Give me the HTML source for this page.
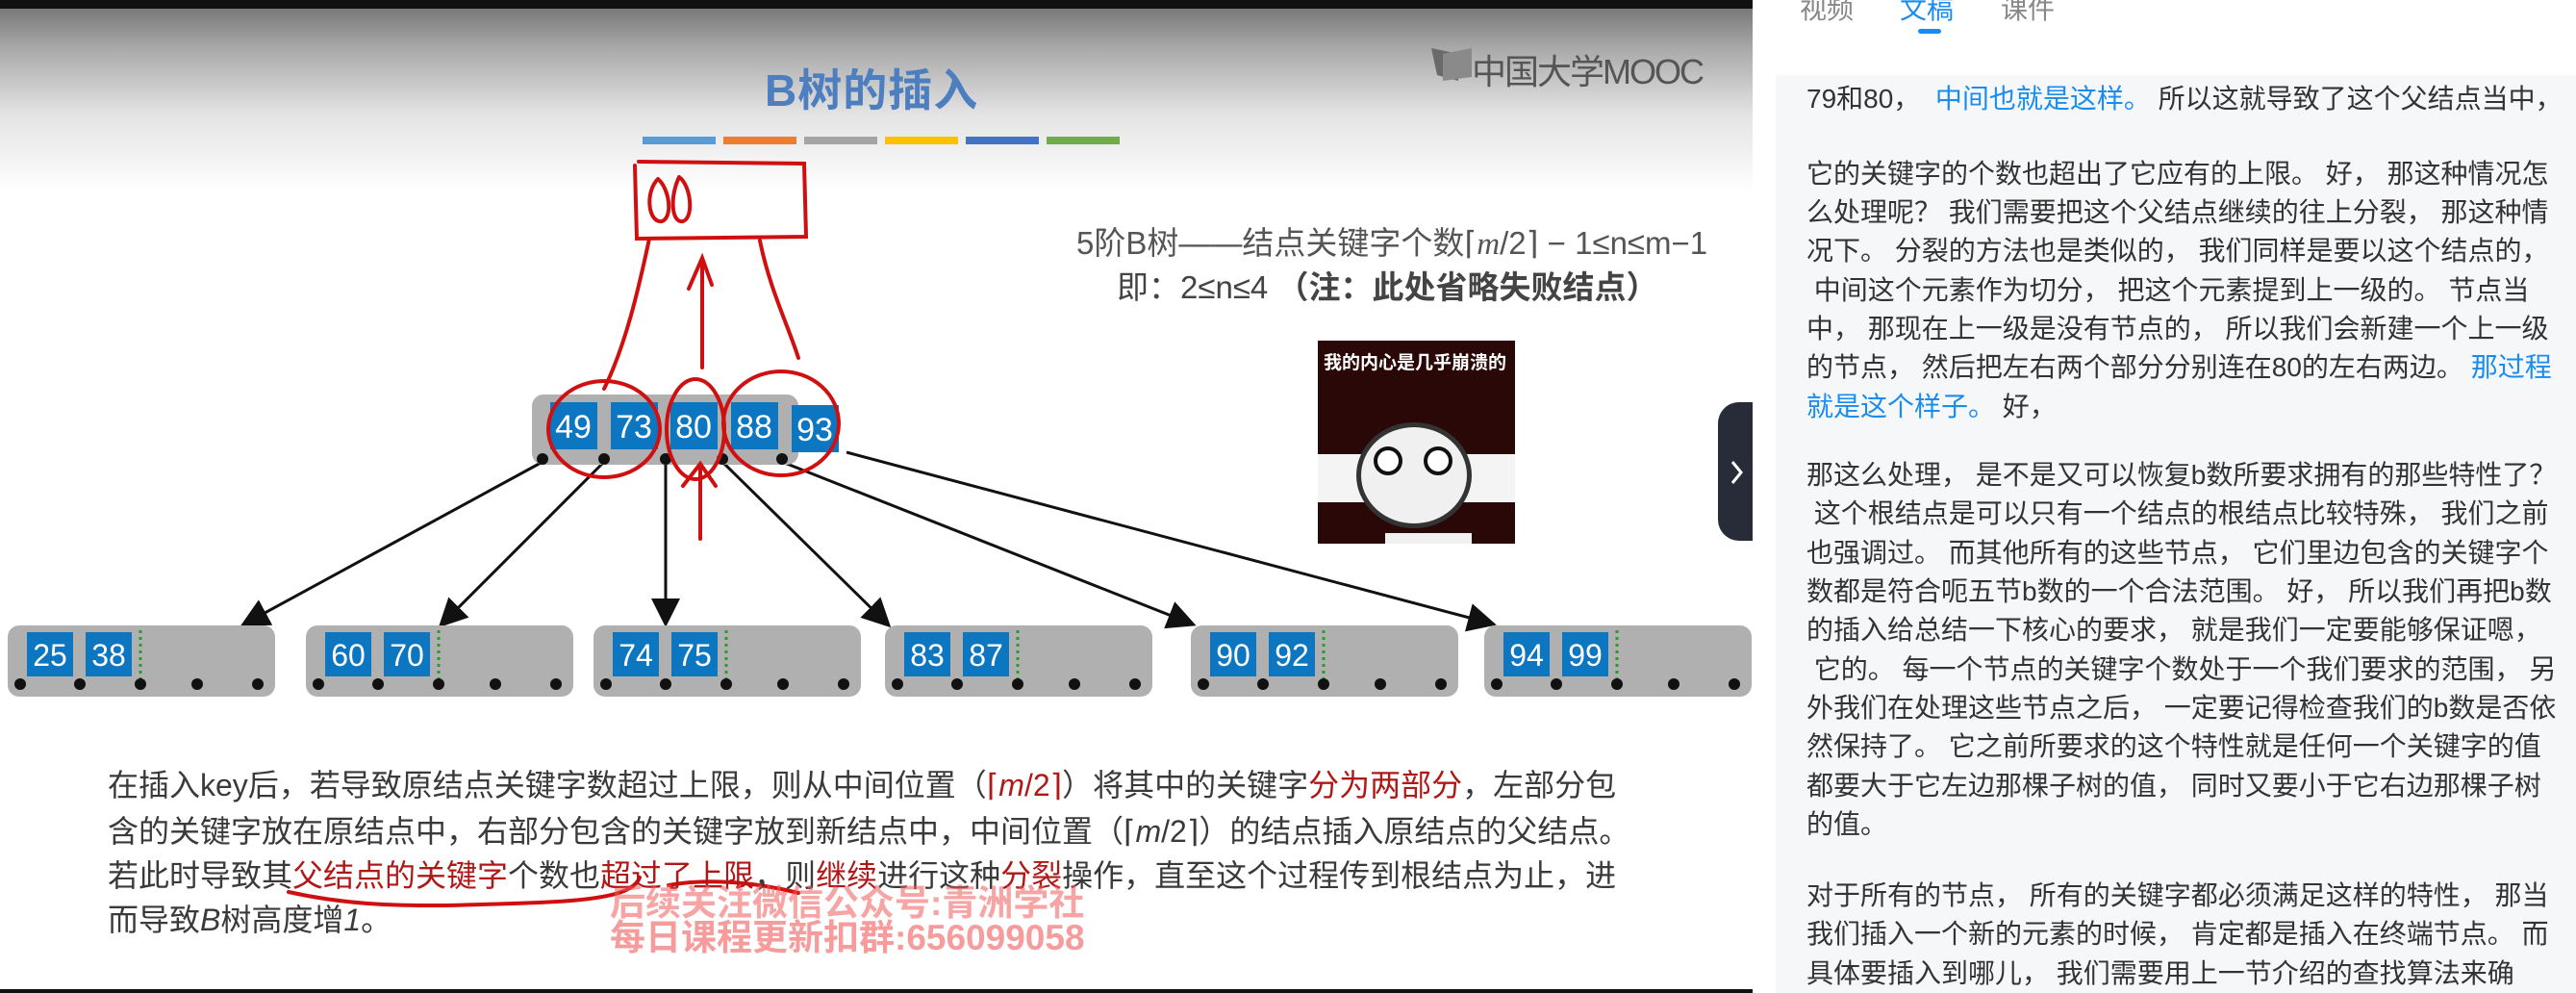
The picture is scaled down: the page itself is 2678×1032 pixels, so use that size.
<!DOCTYPE html>
<html><head><meta charset="utf-8"><style>
*{margin:0;padding:0;box-sizing:border-box}
body{width:2678px;height:1032px;overflow:hidden;background:#fff;position:relative;font-family:"Liberation Sans","Noto Sans CJK SC",sans-serif}
.abs{position:absolute;white-space:nowrap}
.panel{position:absolute;left:1846px;top:78px;width:832px;height:954px;background:#f6f7f9}
.pl{position:absolute;left:1878px;font-size:28px;color:#333;white-space:nowrap;line-height:40px}
.b{color:#1a8cf0}
.bt{position:absolute;left:112px;font-size:32px;color:#3a3a3a;white-space:nowrap;line-height:40px}
.r{color:#b01818}
</style></head><body>
<div class="abs" style="left:0;top:0;width:1822px;height:1032px;background:#fff"></div>
<div class="abs" style="left:0;top:0;width:1822px;height:210px;background:linear-gradient(#6e6e6e 0px,#a9a9a9 50px,#e4e4e4 120px,#fff 200px)"></div>
<div class="abs" style="left:0;top:0;width:1822px;height:9px;background:#111"></div>
<div class="abs" style="left:0;top:1028px;width:1822px;height:4px;background:#111"></div>
<div class="abs" style="left:795px;top:58px;font-size:46px;font-weight:bold;color:#4d7fc0;letter-spacing:1px">B树的插入</div>
<svg class="abs" style="left:1480px;top:44px" width="60" height="50"><path d="M8 6 L36 12 L36 40 L14 34 Z" fill="#6a6a6a"/><path d="M20 12 L50 6 L50 36 L20 40Z" fill="#8a8a8a"/></svg>
<div class="abs" style="left:1530px;top:46px;font-size:36px;color:#555;letter-spacing:-2px">中国大学MOOC</div>
<div class="abs" style="left:668px;top:142px;width:76px;height:8px;background:#5b9bd5"></div>
<div class="abs" style="left:752px;top:142px;width:76px;height:8px;background:#ed7d31"></div>
<div class="abs" style="left:836px;top:142px;width:76px;height:8px;background:#a5a5a5"></div>
<div class="abs" style="left:920px;top:142px;width:76px;height:8px;background:#ffc000"></div>
<div class="abs" style="left:1004px;top:142px;width:76px;height:8px;background:#4472c4"></div>
<div class="abs" style="left:1088px;top:142px;width:76px;height:8px;background:#70ad47"></div>
<div class="abs" style="left:1119px;top:226px;font-size:33px;color:#555">5阶B树——结点关键字个数⌈<i style="font-family:'Liberation Serif'">m</i>/2⌉ − 1≤n≤m−1</div>
<div class="abs" style="left:1161px;top:272px;font-size:33px;color:#444">即：2≤n≤4 <b>（注：此处省略失败结点）</b></div>
<div class="abs" style="left:1370px;top:354px;width:205px;height:211px;background:#2a0808;overflow:hidden">
<div style="position:absolute;left:0;top:118px;width:205px;height:50px;background:#f4f4f4"></div>
<div style="position:absolute;left:40px;top:85px;width:120px;height:110px;border-radius:50%;background:#f0f0f0;border:5px solid #333"></div>
<div style="position:absolute;left:70px;top:200px;width:90px;height:20px;background:#f0f0f0"></div>
<div style="position:absolute;left:58px;top:110px;width:30px;height:30px;border-radius:50%;background:#fff;border:4px solid #111"></div>
<div style="position:absolute;left:110px;top:110px;width:30px;height:30px;border-radius:50%;background:#fff;border:4px solid #111"></div>
<div style="position:absolute;left:6px;top:8px;font-size:19px;color:#fff;font-weight:bold">我的内心是几乎崩溃的</div>
</div>
<div class="abs" style="left:1786px;top:418px;width:36px;height:144px;background:#272c38;border-radius:22px 0 0 22px"></div>
<svg class="abs" style="left:1796px;top:476px" width="20" height="30"><path d="M5 4 L14 15 L5 26" stroke="#fff" stroke-width="3" fill="none"/></svg>
<svg class="abs" style="left:0;top:0" width="1822" height="1032">
<defs><marker id="ah" markerWidth="10" markerHeight="10" refX="8" refY="5" orient="auto"><path d="M0 0 L10 5 L0 10Z" fill="#111"/></marker></defs>
<g stroke="#111" stroke-width="3" marker-end="url(#ah)">
<line x1="564" y1="480" x2="255" y2="648"/>
<line x1="628" y1="480" x2="460" y2="648"/>
<line x1="692" y1="480" x2="692" y2="646"/>
<line x1="751" y1="480" x2="922" y2="648"/>
<line x1="813" y1="480" x2="1238" y2="648"/>
<line x1="880" y1="470" x2="1550" y2="648"/>
</g>
<rect x="553" y="410" width="277" height="73" rx="12" fill="#b0b0b0"/>
<g fill="#0d76c1"><rect x="572" y="418" width="49" height="49"/><rect x="635" y="418" width="49" height="49"/><rect x="697" y="418" width="49" height="49"/><rect x="760" y="418" width="49" height="49"/><rect x="823" y="421" width="49" height="49"/></g>
<g fill="#fff" font-size="34" font-family="Liberation Sans" text-anchor="middle"><text x="596" y="455">49</text><text x="659" y="455">73</text><text x="721" y="455">80</text><text x="784" y="455">88</text><text x="847" y="458">93</text></g>
<g fill="#111"><circle cx="564" cy="477" r="6"/><circle cx="628" cy="477" r="6"/><circle cx="692" cy="477" r="6"/><circle cx="751" cy="477" r="6"/><circle cx="813" cy="477" r="6"/></g>
<g id="leaves"></g>
<g fill="none" stroke="#d01010" stroke-width="4" stroke-linecap="round">
<path d="M660 172 L662 248 L838 246 L836 170 L664 168"/>
<path d="M684 186 C670 200 674 232 688 230 C700 226 696 196 684 186 M706 184 C696 205 698 232 710 230 C722 226 718 192 706 184"/>
<path d="M675 248 C664 300 650 360 628 404"/>
<path d="M730 382 L730 275 M716 300 L730 268 L740 296"/>
<path d="M790 250 C800 300 820 340 830 372"/>
<ellipse cx="628" cy="446" rx="58" ry="50"/>
<ellipse cx="723" cy="446" rx="30" ry="52"/>
<ellipse cx="812" cy="440" rx="60" ry="54"/>
<path d="M728 560 L728 484 M710 505 L728 482 L744 505"/>
<path d="M300 927 C380 945 450 942 560 938 C640 935 660 925 665 912 M695 920 C740 912 790 918 830 928"/>
</g>
</svg>
<div class="bt" style="top:796px">在插入key后，若导致原结点关键字数超过上限，则从中间位置（<span class="r">⌈<i>m</i>/2⌉</span>）将其中的关键字<span class="r">分为两部分</span>，左部分包</div>
<div class="bt" style="top:844px">含的关键字放在原结点中，右部分包含的关键字放到新结点中，中间位置（⌈<i>m</i>/2⌉）的结点插入原结点的父结点。</div>
<div class="bt" style="top:890px">若此时导致其<span class="r">父结点的关键字</span>个数也<span class="r">超过了上限</span>，则<span class="r">继续</span>进行这种<span class="r">分裂</span>操作，直至这个过程传到根结点为止，进</div>
<div class="bt" style="top:936px">而导致<i>B</i>树高度增<i>1</i>。</div>
<div class="abs" style="left:634px;top:908px;font-size:37px;font-weight:bold;color:rgba(240,90,90,0.55)">后续关注微信公众号:青洲学社</div>
<div class="abs" style="left:634px;top:944px;font-size:37px;font-weight:bold;color:rgba(240,90,90,0.6)">每日课程更新扣群:656099058</div>
<div class="abs" style="left:1871px;top:-12px;font-size:28px;color:#888">视频</div>
<div class="abs" style="left:1975px;top:-12px;font-size:28px;color:#1a8cf0">文稿</div>
<div class="abs" style="left:2080px;top:-12px;font-size:28px;color:#888">课件</div>
<div class="abs" style="left:1994px;top:30px;width:24px;height:5px;border-radius:3px;background:#1a8cf0"></div>
<div class="panel"></div>
<div class="pl" style="top:83px">79和80，&nbsp; <span class="b">中间也就是这样。</span> 所以这就导致了这个父结点当中，</div>
<div class="pl" style="top:161px">它的关键字的个数也超出了它应有的上限。 好，&nbsp;那这种情况怎</div>
<div class="pl" style="top:201px">么处理呢？ 我们需要把这个父结点继续的往上分裂，&nbsp;那这种情</div>
<div class="pl" style="top:241px">况下。 分裂的方法也是类似的，&nbsp;我们同样是要以这个结点的，</div>
<div class="pl" style="top:282px">&nbsp;中间这个元素作为切分，&nbsp;把这个元素提到上一级的。 节点当</div>
<div class="pl" style="top:322px">中，&nbsp;那现在上一级是没有节点的，&nbsp;所以我们会新建一个上一级</div>
<div class="pl" style="top:362px">的节点，&nbsp;然后把左右两个部分分别连在80的左右两边。 <span class="b">那过程</span></div>
<div class="pl" style="top:403px"><span class="b">就是这个样子。</span> 好，</div>
<div class="pl" style="top:474px">那这么处理，&nbsp;是不是又可以恢复b数所要求拥有的那些特性了？</div>
<div class="pl" style="top:514px">&nbsp;这个根结点是可以只有一个结点的根结点比较特殊，&nbsp;我们之前</div>
<div class="pl" style="top:555px">也强调过。 而其他所有的这些节点，&nbsp;它们里边包含的关键字个</div>
<div class="pl" style="top:595px">数都是符合呃五节b数的一个合法范围。 好，&nbsp;所以我们再把b数</div>
<div class="pl" style="top:635px">的插入给总结一下核心的要求，&nbsp;就是我们一定要能够保证嗯，</div>
<div class="pl" style="top:676px">&nbsp;它的。 每一个节点的关键字个数处于一个我们要求的范围，&nbsp;另</div>
<div class="pl" style="top:716px">外我们在处理这些节点之后，&nbsp;一定要记得检查我们的b数是否依</div>
<div class="pl" style="top:756px">然保持了。 它之前所要求的这个特性就是任何一个关键字的值</div>
<div class="pl" style="top:797px">都要大于它左边那棵子树的值，&nbsp;同时又要小于它右边那棵子树</div>
<div class="pl" style="top:837px">的值。</div>
<div class="pl" style="top:911px">对于所有的节点，&nbsp;所有的关键字都必须满足这样的特性，&nbsp;那当</div>
<div class="pl" style="top:951px">我们插入一个新的元素的时候，&nbsp;肯定都是插入在终端节点。 而</div>
<div class="pl" style="top:992px">具体要插入到哪儿，&nbsp;我们需要用上一节介绍的查找算法来确</div>
<script>
var xs=[8,318,617,920,1238,1543],k=[["25","38"],["60","70"],["74","75"],["83","87"],["90","92"],["94","99"]],s="";
xs.forEach(function(x,i){s+='<rect x="'+x+'" y="650" width="278" height="74" rx="12" fill="#b0b0b0"/>';
s+='<rect x="'+(x+20)+'" y="657" width="48" height="46" fill="#0d76c1"/><rect x="'+(x+81)+'" y="657" width="48" height="46" fill="#0d76c1"/>';
s+='<text x="'+(x+44)+'" y="692" fill="#fff" font-size="32" text-anchor="middle" font-family="Liberation Sans">'+k[i][0]+'</text><text x="'+(x+105)+'" y="692" fill="#fff" font-size="32" text-anchor="middle" font-family="Liberation Sans">'+k[i][1]+'</text>';
s+='<line x1="'+(x+138)+'" y1="655" x2="'+(x+138)+'" y2="708" stroke="#2a9a2a" stroke-width="3" stroke-dasharray="3 4"/>';
[13,75,138,197,260].forEach(function(d){s+='<circle cx="'+(x+d)+'" cy="711" r="6" fill="#111"/>';});});
document.getElementById("leaves").innerHTML=s;
</script>
</body></html>
